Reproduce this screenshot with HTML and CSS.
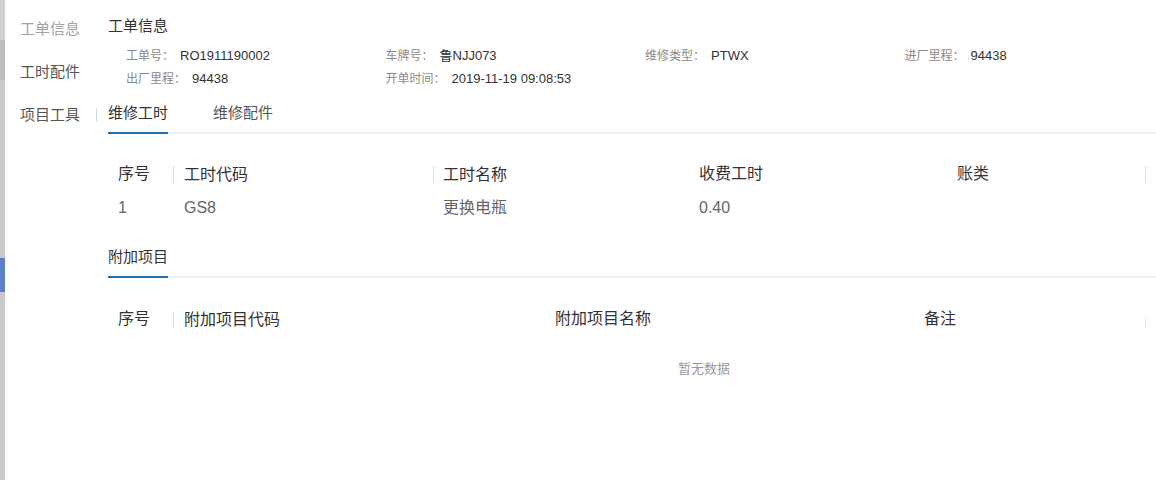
FILE: index.html
```html
<!DOCTYPE html>
<html lang="zh-CN">
<head>
<meta charset="utf-8">
<title>工单信息</title>
<link rel="stylesheet" href="styles.css">
</head>
<body>
<div class="page">
  <div class="backdrop-strip"></div>
  <nav class="side-nav">
    <div class="nav-item nav-item--muted">工单信息</div>
    <div class="nav-item">工时配件</div>
    <div class="nav-item nav-item--sep">项目工具</div>
  </nav>
  <main class="main">
    <h2 class="title">工单信息</h2>
    <div class="info-grid">
      <div class="info"><span class="label">工单号：</span><span class="value">RO1911190002</span></div>
      <div class="info"><span class="label">车牌号：</span><span class="value">鲁NJJ073</span></div>
      <div class="info"><span class="label">维修类型：</span><span class="value">PTWX</span></div>
      <div class="info"><span class="label">进厂里程：</span><span class="value">94438</span></div>
      <div class="info"><span class="label">出厂里程：</span><span class="value">94438</span></div>
      <div class="info"><span class="label">开单时间：</span><span class="value">2019-11-19 09:08:53</span></div>
    </div>

    <div class="tabs">
      <div class="tab tab--active">维修工时</div>
      <div class="tab">维修配件</div>
    </div>

    <div class="table table--hours">
      <div class="row row--head">
        <div class="cell c1">序号</div>
        <div class="cell c2 sep">工时代码</div>
        <div class="cell c3 sep">工时名称</div>
        <div class="cell c4">收费工时</div>
        <div class="cell c5">账类</div>
        <div class="cell c6 sep"></div>
      </div>
      <div class="row row--body">
        <div class="cell c1">1</div>
        <div class="cell c2">GS8</div>
        <div class="cell c3">更换电瓶</div>
        <div class="cell c4">0.40</div>
        <div class="cell c5"></div>
        <div class="cell c6"></div>
      </div>
    </div>

    <div class="tabs tabs--extra">
      <div class="tab tab--active">附加项目</div>
    </div>

    <div class="table table--extra">
      <div class="row row--head">
        <div class="cell d1">序号</div>
        <div class="cell d2 sep">附加项目代码</div>
        <div class="cell d3">附加项目名称</div>
        <div class="cell d4">备注</div>
        <div class="cell d5 sep sep--faint"></div>
      </div>
      <div class="empty">暂无数据</div>
    </div>
  </main>
</div>
</body>
</html>
```

FILE: styles.css
```css
* {
  box-sizing: border-box;
}

html, body {
  margin: 0;
  padding: 0;
  background: #ffffff;
}

body {
  font-family: "Liberation Sans", "Noto Sans CJK SC", Arial, sans-serif;
  color: #333;
  width: 1156px;
  height: 480px;
  overflow: hidden;
}

.page {
  display: flex;
  height: 480px;
}

.backdrop-strip {
  flex: 0 0 5px;
  background: linear-gradient(to bottom,
    #cfcfcf 0, #cfcfcf 40px,
    #bdbdbd 40px, #bdbdbd 80px,
    #cacaca 80px, #cacaca 258px,
    #5d80c2 258px, #5d80c2 292px,
    #c9c9c9 292px, #c9c9c9 100%);
}

.side-nav {
  flex: 0 0 103px;
  padding-top: 7px;
  padding-left: 15px;
}

.nav-item {
  font-size: 15px;
  line-height: 43px;
  height: 43px;
  color: #555;
  white-space: nowrap;
  display: flex;
  align-items: center;
}

.nav-item--muted {
  color: #a3a3a3;
}

.nav-item--sep::after {
  content: "";
  display: inline-block;
  width: 1px;
  height: 13px;
  background: #d6d6d6;
  margin-left: 16px;
}

.main {
  flex: 1 1 auto;
  padding-top: 16px;
  min-width: 0;
}

.title {
  margin: 0;
  font-size: 15px;
  line-height: 20px;
  font-weight: normal;
  color: #333;
}

.info-grid {
  margin-top: 8px;
  padding-left: 18px;
  display: grid;
  grid-template-columns: repeat(4, 259.5px);
  grid-auto-rows: 23px;
  font-size: 12px;
}

.info {
  line-height: 23px;
  white-space: nowrap;
}

.label {
  color: #8a8a8a;
  font-size: 12px;
}

.value {
  color: #333;
  font-size: 13px;
  margin-left: 6px;
}

.tabs {
  display: flex;
  gap: 45px;
  margin-top: 13px;
  border-bottom: 2px solid #eef0f2;
}

.tab {
  font-size: 15px;
  line-height: 20px;
  padding-bottom: 9px;
  color: #555;
  margin-bottom: -2px;
  border-bottom: 2px solid transparent;
}

.tab--active {
  color: #333;
  border-bottom-color: #1f6db4;
}

.table {
  margin-top: 23px;
}

.row {
  display: flex;
  align-items: center;
  height: 34px;
}

.row--head .cell {
  font-size: 16px;
  color: #333;
}

.row--body .cell {
  font-size: 16px;
  color: #666;
}

.cell {
  white-space: nowrap;
  padding-left: 10px;
  line-height: 20px;
}

.sep {
  border-left: 1px solid #dcdcdc;
  padding-left: 10px;
}

.row--head .sep {
  line-height: 17px;
}

.c1 { width: 65px; }
.c2 { width: 260px; }
.c3 { width: 256px; padding-left: 9px; }
.c4 { width: 258px; }
.c5 { width: 198px; }
.c6 { width: 11px; height: 17px; }

.row--body .c2 { padding-left: 11px; }
.row--body .c3 { padding-left: 10px; }

.tabs--extra {
  margin-top: 22px;
  border-bottom-color: #f0f1f3;
}

.table--extra {
  margin-top: 24px;
}

.d1 { width: 65px; }
.d2 { width: 372px; }
.d3 { width: 369px; }
.d4 { width: 231px; }
.d5 { width: 11px; height: 10px; align-self: flex-end; margin-bottom: 9px; }

.sep--faint {
  border-left-color: #e6e6e6;
}

.empty {
  padding-top: 25px;
  padding-left: 570px;
  font-size: 13px;
  line-height: 16px;
  color: #9a9a9a;
}
```
